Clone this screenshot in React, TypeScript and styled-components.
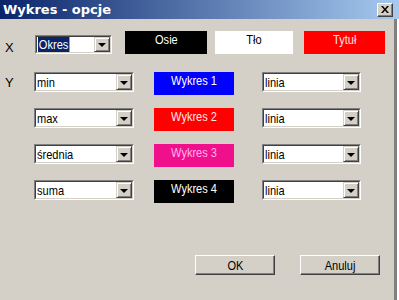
import React from "react";
import styled, { createGlobalStyle } from "styled-components";

const UI_FONT = `"Liberation Sans", Arial, sans-serif`;

const Global = createGlobalStyle`
  html, body { margin: 0; padding: 0; background: #d4d0c8; }
  body { font-family: ${UI_FONT}; }
`;

const Window = styled.div`
  width: 399px;
  height: 300px;
  box-sizing: border-box;
  display: flex;
  flex-direction: column;
  background: #d4d0c8;
  overflow: hidden;
`;

const TitleBar = styled.div`
  height: 19px;
  flex: none;
  display: flex;
  align-items: center;
  justify-content: space-between;
  padding: 0 6px 0 3px;
  background: linear-gradient(to right, #0a246a, #a6caf0);
  color: #fff;
  font: bold 13px "DejaVu Sans", Verdana, sans-serif;
`;

const CloseBtn = styled.div`
  width: 16px;
  height: 14px;
  box-sizing: border-box;
  background: #d4d0c8;
  border: 1px solid;
  border-color: #fff #404040 #404040 #fff;
  box-shadow: inset -1px -1px #808080;
  display: flex;
  align-items: center;
  justify-content: center;
`;

const Body = styled.div`
  flex: 1;
  display: flex;
  flex-direction: column;
  border-right: 2px solid #fff;
  box-shadow: inset -3px 0 #808080;
`;

const XRow = styled.div`
  display: flex;
  align-items: flex-start;
  margin-top: 12px;
`;

const YRow = styled.div<{ $top: number }>`
  display: flex;
  align-items: flex-start;
  margin-top: ${(p) => p.$top}px;
`;

const Label = styled.div<{ $mt: number; $w: number }>`
  width: ${(p) => p.$w}px;
  box-sizing: border-box;
  padding-left: 5px;
  margin-top: ${(p) => p.$mt}px;
  font-size: 13px;
  line-height: 14px;
  color: #000;
`;

const Narrow = styled.span<{ $origin?: string }>`
  display: inline-block;
  transform: scaleX(0.85);
  transform-origin: ${(p) => p.$origin ?? "left"} center;
  white-space: nowrap;
`;

const Combo = styled.div<{ $w: number; $h: number; $ml?: number; $mt?: number }>`
  width: ${(p) => p.$w}px;
  height: ${(p) => p.$h}px;
  margin-left: ${(p) => p.$ml ?? 0}px;
  margin-top: ${(p) => p.$mt ?? 0}px;
  box-sizing: border-box;
  display: flex;
  border: 1px solid;
  border-color: #808080 #fff #fff #808080;
  flex: none;
`;

const ComboInner = styled.div`
  flex: 1;
  display: flex;
  border: 1px solid;
  border-color: #404040 #d4d0c8 #d4d0c8 #404040;
  background: #fff;
`;

const ComboText = styled.div`
  flex: 1;
  display: flex;
  align-items: center;
  padding-left: 1px;
  font-size: 13px;
  color: #000;
  overflow: hidden;
  white-space: nowrap;
`;

const Selected = styled.span`
  background: #0a246a;
  color: #fff;
  padding: 0 1px;
  line-height: 15px;
`;

const DropBtn = styled.div`
  width: 16px;
  box-sizing: border-box;
  background: #d4d0c8;
  border: 1px solid;
  border-color: #d4d0c8 #404040 #404040 #d4d0c8;
  box-shadow: inset 1px 1px #fff, inset -1px -1px #808080;
  display: flex;
  align-items: center;
  justify-content: center;
`;

const Arrow = styled.div`
  width: 0;
  height: 0;
  border-left: 4px solid transparent;
  border-right: 4px solid transparent;
  border-top: 4px solid #000;
  margin-top: 1px;
`;

const Swatch = styled.div<{ $bg: string; $fg: string; $w: number; $ml: number }>`
  width: ${(p) => p.$w}px;
  height: 23px;
  margin-left: ${(p) => p.$ml}px;
  flex: none;
  background: ${(p) => p.$bg};
  color: ${(p) => p.$fg};
  text-align: center;
  font-size: 13px;
  line-height: 14px;
  padding-top: 2px;
  box-sizing: border-box;
`;

const ButtonRow = styled.div`
  margin-top: auto;
  margin-bottom: 25px;
  display: flex;
  justify-content: flex-end;
  gap: 25px;
  padding-right: 17px;
`;

const Button = styled.div`
  width: 80px;
  height: 20px;
  box-sizing: border-box;
  border: 1px solid;
  border-color: #fff #404040 #404040 #fff;
  box-shadow: inset -1px -1px #808080;
  display: flex;
  align-items: center;
  justify-content: center;
  font-size: 13px;
  color: #000;
`;

const ComboBox: React.FC<{
  w: number;
  h: number;
  ml?: number;
  mt?: number;
  children: React.ReactNode;
}> = ({ w, h, ml, mt, children }) => (
  <Combo $w={w} $h={h} $ml={ml} $mt={mt}>
    <ComboInner>
      <ComboText>{children}</ComboText>
      <DropBtn>
        <Arrow />
      </DropBtn>
    </ComboInner>
  </Combo>
);

const rows = [
  { stat: "min", label: "Wykres 1", bg: "#0000ff", fg: "#ffffff" },
  { stat: "max", label: "Wykres 2", bg: "#ff0000", fg: "#ffe8e8" },
  { stat: "średnia", label: "Wykres 3", bg: "#f0108c", fg: "#ffb4f0" },
  { stat: "suma", label: "Wykres 4", bg: "#000000", fg: "#ffffff" },
];

export default function App() {
  return (
    <>
      <Global />
      <Window>
        <TitleBar>
          <span>Wykres - opcje</span>
          <CloseBtn>
            <svg width="8" height="7" viewBox="0 0 8 7">
              <path d="M0 0h2l2 2.5L6 0h2L5 3.5 8 7H6L4 4.5 2 7H0l3-3.5z" fill="#000" />
            </svg>
          </CloseBtn>
        </TitleBar>
        <Body>
          <XRow>
            <Label $w={35} $mt={10}>X</Label>
            <ComboBox w={77} h={19} mt={4}>
              <Narrow>
                <Selected>Okres</Selected>
              </Narrow>
            </ComboBox>
            <Swatch $bg="#000000" $fg="#ffffff" $w={82} $ml={13}>
              <Narrow $origin="center">Osie</Narrow>
            </Swatch>
            <Swatch $bg="#ffffff" $fg="#000000" $w={78} $ml={8}>
              <Narrow $origin="center">Tło</Narrow>
            </Swatch>
            <Swatch $bg="#ff0000" $fg="#ffe0e0" $w={81} $ml={11}>
              <Narrow $origin="center">Tytuł</Narrow>
            </Swatch>
          </XRow>
          {rows.map((r, i) => (
            <YRow key={r.label} $top={i === 0 ? 17 : 13}>
              <Label $w={34} $mt={4}>{i === 0 ? "Y" : ""}</Label>
              <ComboBox w={100} h={20}>
                <Narrow>{r.stat}</Narrow>
              </ComboBox>
              <Swatch $bg={r.bg} $fg={r.fg} $w={80} $ml={20}>
                <Narrow $origin="center">{r.label}</Narrow>
              </Swatch>
              <ComboBox w={99} h={20} ml={28}>
                <Narrow>linia</Narrow>
              </ComboBox>
            </YRow>
          ))}
          <ButtonRow>
            <Button>
              <Narrow $origin="center">OK</Narrow>
            </Button>
            <Button>
              <Narrow $origin="center">Anuluj</Narrow>
            </Button>
          </ButtonRow>
        </Body>
      </Window>
    </>
  );
}
